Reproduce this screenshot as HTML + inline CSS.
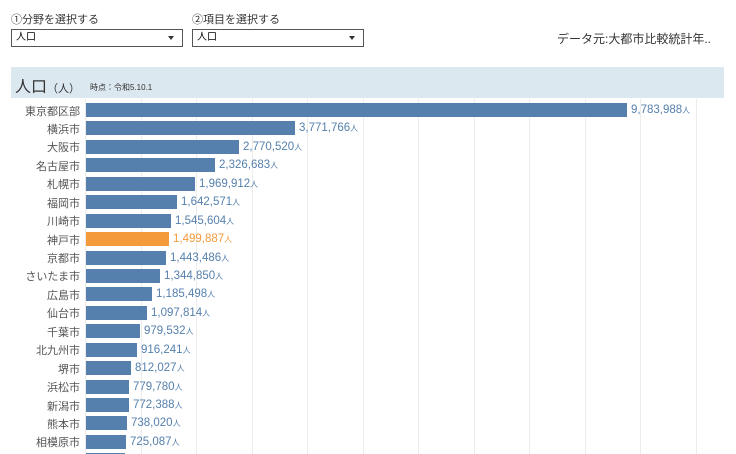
<!DOCTYPE html>
<html style="width:736px;height:454px;overflow:hidden"><head><meta charset="utf-8">
<style>
body{margin:0;width:736px;height:454px;overflow:hidden;background:#fff;font-family:"Liberation Sans","Noto Sans CJK JP",sans-serif;position:relative}
.a{position:absolute}
.lab{font-size:11px;color:#333}
.sel{position:absolute;top:29px;height:16px;border:1px solid #555;background:#fff;font-size:10px;line-height:16px;padding-left:4px;box-sizing:content-box}
.sel:after{content:"";position:absolute;right:8px;top:6px;border-left:3px solid transparent;border-right:3px solid transparent;border-top:4px solid #333}
.g{position:absolute;top:99px;width:1px;height:355px;background:#ececec}
.n{position:absolute;right:656px;font-size:11px;color:#555;text-align:right;white-space:nowrap}
.b{position:absolute;left:86px;height:14px;background:#5580ad}
.v{position:absolute;font-size:11.5px;color:#5580ad;white-space:nowrap}
.v small{font-size:8px}
</style></head><body>
<div class="a lab" style="left:11px;top:11px">①分野を選択する</div>
<div class="a lab" style="left:192px;top:11px">②項目を選択する</div>
<div class="sel" style="left:11px;width:166px">人口</div>
<div class="sel" style="left:192px;width:166px">人口</div>
<div class="a" style="left:557px;top:30px;font-size:12px;color:#333">データ元:大都市比較統計年..</div>
<div class="a" style="left:11px;top:67px;width:713px;height:31px;background:#dce8ef"></div>
<div class="a" style="left:15px;top:73px;font-size:16px;color:#333">人口<span style="font-size:11px">（人）</span><span style="font-size:8px;margin-left:10px;vertical-align:2px">時点：令和5.10.1</span></div>
<div id="c"></div>
<script>
var gl="";for(var i=0;i<12;i++){gl+='<div class="g" style="left:'+Math.round(85+i*55.5)+'px"></div>';}
var d=[["東京都区部",9783988],["横浜市",3771766],["大阪市",2770520],["名古屋市",2326683],["札幌市",1969912],["福岡市",1642571],["川崎市",1545604],["神戸市",1499887],["京都市",1443486],["さいたま市",1344850],["広島市",1185498],["仙台市",1097814],["千葉市",979532],["北九州市",916241],["堺市",812027],["浜松市",779780],["新潟市",772388],["熊本市",738020],["相模原市",725087],["",700000]];
var h=gl;
d.forEach(function(r,i){var c=110+i*18.44;var w=Math.round(r[1]*541/9783988);var col=i==7?"#f59a3b":"#5580ad";
h+='<div class="n" style="top:'+(c-7.5)+'px">'+r[0]+'</div>';
h+='<div class="b" style="top:'+(c-7)+'px;width:'+w+'px;background:'+col+'"></div>';
if(r[0])h+='<div class="v" style="left:'+(86+w+4)+'px;top:'+(c-6)+'px;color:'+col+'">'+r[1].toLocaleString("en-US")+'<small>人</small></div>';});
document.getElementById("c").innerHTML=h;
</script>
</body></html>
